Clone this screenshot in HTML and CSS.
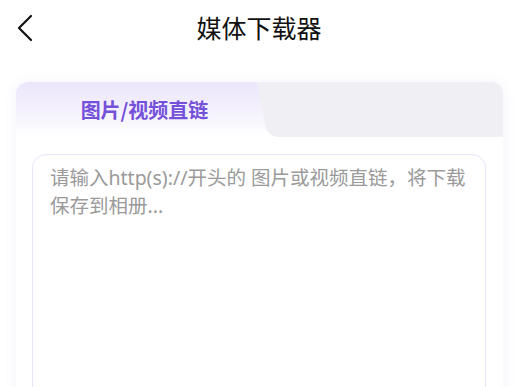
FILE: index.html
```html
<!DOCTYPE html>
<html lang="zh-CN">

<head>
  <meta charset="UTF-8">
  <meta name="viewport" content="width=device-width, initial-scale=1.0">
  <title>媒体下载器</title>
  <link rel="stylesheet" href="styles.css">
</head>

<body>
  <div class="nav">
    <a class="nav-back" href="#">
      <svg width="18" height="28" viewBox="0 0 18 28">
        <path d="M15 2 L3 14 L15 26" fill="none" stroke="#111" stroke-width="2.2" stroke-linecap="round" stroke-linejoin="round" />
      </svg>
    </a>
    <h1 class="nav-title">媒体下载器</h1>
    <span></span>
  </div>

  <div class="card">
    <div class="tabs">
      <div class="tab active">图片/视频直链</div>
      <div class="tab other"></div>
    </div>
    <div class="card-body">
      <textarea class="link-input" placeholder="请输入http(s)://开头的 图片或视频直链，将下载保存到相册..."></textarea>
    </div>
  </div>
</body>

</html>
```

FILE: styles.css
```css
body {
  margin: 0;
  background: #ffffff;
  font-family: "Noto Sans", "Noto Sans CJK SC", sans-serif;
  color: #111111;
}

.nav {
  display: grid;
  grid-template-columns: 56px 1fr 56px;
  align-items: center;
  height: 56px;
}

.nav-back {
  display: flex;
  padding-left: 16px;
}

.nav-title {
  margin: 0;
  padding-left: 4px;
  text-align: center;
  font-size: 25px;
  font-weight: 400;
  line-height: 56px;
}

.card {
  margin: 26px 11px 0 16px;
  background: #ffffff;
  border-radius: 12px;
  box-shadow: 0 0 14px rgba(110, 100, 200, 0.08);
}

.tabs {
  display: flex;
  height: 55px;
  border-radius: 12px 12px 0 0;
  overflow: hidden;
  background: linear-gradient(180deg, #ebe6fb 0%, #f5f2fd 55%, #ffffff 100%);
}

.tab {
  display: flex;
  align-items: center;
  justify-content: center;
}

.tab.active {
  width: 225px;
  padding-left: 16px;
  color: #7550d9;
  font-size: 20px;
  font-weight: 700;
  font-family: "Noto Sans CJK SC", sans-serif;
}

.tab.other {
  flex: 1;
  position: relative;
}

.tab.other::before {
  content: "";
  position: absolute;
  top: 0;
  bottom: 0;
  left: 0;
  right: -30px;
  background: #efeff4;
  border-bottom-left-radius: 10px;
  transform: skewX(11deg);
  transform-origin: top left;
}

.card-body {
  padding: 17px 17px 0 16px;
}

.link-input {
  display: block;
  box-sizing: border-box;
  width: 100%;
  height: 300px;
  padding: 9px 17px;
  border: 1px solid #e9e5fa;
  border-radius: 14px;
  resize: none;
  outline: none;
  font-family: "Noto Sans", "Noto Sans CJK SC", sans-serif;
  font-size: 19.5px;
  line-height: 28px;
  color: #333333;
}

.link-input::placeholder {
  color: #9a9a9a;
}
```
